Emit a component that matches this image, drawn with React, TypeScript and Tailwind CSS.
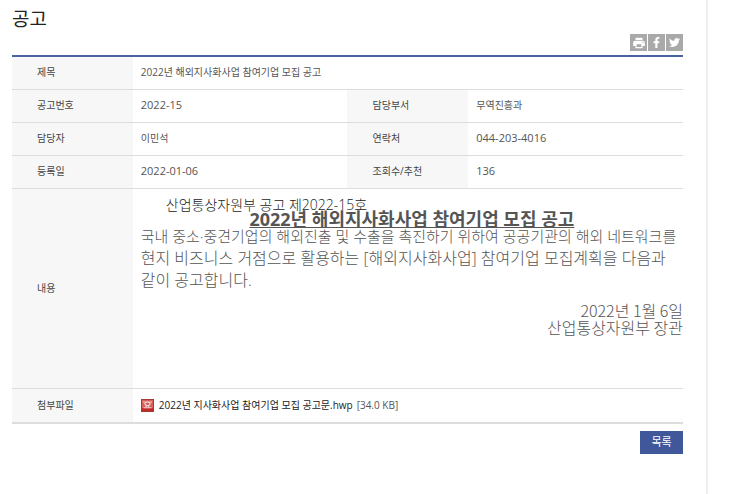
import React from "react";
import { FaFacebookF, FaTwitter } from "react-icons/fa";
import { MdPrint } from "react-icons/md";

const shareLinks = [
  { label: "인쇄", Icon: MdPrint, size: 14 },
  { label: "페이스북", Icon: FaFacebookF, size: 11 },
  { label: "트위터", Icon: FaTwitter, size: 11 },
];

const infoRows = [
  [
    { label: "공고번호", value: "2022-15" },
    { label: "담당부서", value: "무역진흥과" },
  ],
  [
    { label: "담당자", value: "이민석" },
    { label: "연락처", value: "044-203-4016" },
  ],
  [
    { label: "등록일", value: "2022-01-06" },
    { label: "조회수/추천", value: "136" },
  ],
];

const HeadCell: React.FC<{ children: React.ReactNode }> = ({ children }) => (
  <th scope="row" className="bg-[#f7f7f7] pl-[25px] text-left text-[10px] font-normal text-[#444]">
    {children}
  </th>
);

// Numbers are set one step larger than the Hangul text
const ValueCell: React.FC<{ value: string }> = ({ value }) => (
  <td className={/^[\d-]+$/.test(value) ? "pl-2 text-[11px]" : "pl-2 text-[10px]"}>{value}</td>
);

const FileIcon = () => (
  <svg width="13" height="13" viewBox="0 0 13 13" aria-hidden="true" className="shrink-0">
    <rect width="13" height="13" fill="#a83a34" />
    <rect x="1" y="1" width="11" height="11" fill="#d8605a" />
    <path d="M1 9h11v3H1z" fill="#c22a25" />
    <path d="M2 3h2.5M8.5 3H11" stroke="#f3d5d3" strokeWidth="1" />
    <ellipse cx="6.5" cy="4.8" rx="2.6" ry="1.9" fill="none" stroke="#fff" strokeWidth="1" />
    <path d="M5.2 6.6v2M7.8 6.6v2M2.5 8.8h8" stroke="#f5dad8" strokeWidth="1" />
  </svg>
);

export default function App() {
  return (
    <div className="flex min-h-screen bg-white font-['Open_Sans','Noto_Sans_CJK_KR',sans-serif] text-[#555]">
      <main className="min-w-0 flex-1 border-r-2 border-[#eee] pl-3 pr-[23px] pt-1">
        <h1 className="text-[19px] leading-[30px] text-[#222]">공고</h1>

        <div className="flex justify-end gap-px pb-1">
          {shareLinks.map(({ label, Icon, size }) => (
            <button
              key={label}
              type="button"
              aria-label={label}
              className="flex h-[17px] w-[17px] items-center justify-center bg-[#a9a9a9] text-white"
            >
              <Icon size={size} />
            </button>
          ))}
        </div>

        <table className="w-full table-fixed border-collapse border-b-2 border-t-2 border-b-[#ddd] border-t-[#4862a3]">
          <colgroup>
            <col className="w-[18%]" />
            <col className="w-[32%]" />
            <col className="w-[18%]" />
            <col className="w-[32%]" />
          </colgroup>
          <tbody>
            <tr className="h-[33px] border-b border-[#ddd]">
              <HeadCell>제목</HeadCell>
              <td colSpan={3} className="pl-2 text-[10px]">
                2022년 해외지사화사업 참여기업 모집 공고
              </td>
            </tr>
            {infoRows.map((row) => (
              <tr key={row[0].label} className="h-[33px] border-b border-[#ddd]">
                {row.map((item) => (
                  <React.Fragment key={item.label}>
                    <HeadCell>{item.label}</HeadCell>
                    <ValueCell value={item.value} />
                  </React.Fragment>
                ))}
              </tr>
            ))}
            <tr className="h-[200px] border-b border-[#ddd]">
              <HeadCell>내용</HeadCell>
              <td colSpan={3} className="break-keep pl-2 pt-[9px] align-top font-light">
                <p className="pl-[25px] text-[14px] leading-[14px] text-[#222]">산업통상자원부 공고 제2022-15호</p>
                <h2 className="text-center text-[18px] font-bold leading-[14px] underline">
                  2022년 해외지사화사업 참여기업 모집 공고
                </h2>
                <p className="text-[15px] leading-[21px]">
                  국내 중소·중견기업의 해외진출 및 수출을 촉진하기 위하여 공공기관의 해외 네트워크를
                </p>
                <p className="text-[16px] leading-[22px]">
                  현지 비즈니스 거점으로 활용하는 [해외지사화사업] 참여기업 모집계획을 다음과 같이 공고합니다.
                </p>
                <p className="mt-[11px] text-right font-['Noto_Sans_CJK_KR',sans-serif] text-[16px] leading-[17px]">
                  2022년 1월 6일
                  <br />
                  산업통상자원부 장관
                </p>
              </td>
            </tr>
            <tr className="h-[35px]">
              <HeadCell>첨부파일</HeadCell>
              <td colSpan={3} className="pl-2 text-[10px]">
                <div className="flex items-center">
                  <FileIcon />
                  <a href="#file" className="ml-[5px] text-[#222]">
                    2022년 지사화사업 참여기업 모집 공고문.hwp
                  </a>
                  <span className="ml-1">[34.0 KB]</span>
                </div>
              </td>
            </tr>
          </tbody>
        </table>

        <div className="flex justify-end pt-[7px]">
          <button type="button" className="h-[23px] w-[43px] bg-[#405799] text-[11px] text-white">
            목록
          </button>
        </div>
      </main>
      <div className="w-[35px]" />
    </div>
  );
}
